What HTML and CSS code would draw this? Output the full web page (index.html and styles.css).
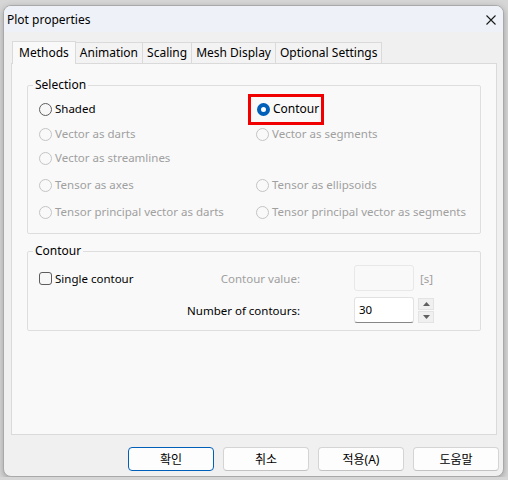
FILE: index.html
```html
<!DOCTYPE html>
<html lang="ko">

<head>
    <meta charset="UTF-8">
    <meta name="viewport" content="width=device-width, initial-scale=1.0">
    <title>Plot properties</title>
    <link rel="stylesheet" href="styles.css">
</head>

<body>
    <div class="window">
        <!-- Title bar -->
        <div class="titlebar">
            <span class="title">Plot properties</span>
            <span class="close">
                <svg width="10" height="10" viewBox="0 0 10 10">
                    <path d="M0.5 0.5 L9.5 9.5 M9.5 0.5 L0.5 9.5" stroke="#1a1a1a" stroke-width="1.1" fill="none" />
                </svg>
            </span>
        </div>

        <div class="content">
            <!-- Tabs -->
            <div class="tabs">
                <div class="tab active">Methods</div>
                <div class="tab">Animation</div>
                <div class="tab">Scaling</div>
                <div class="tab">Mesh Display</div>
                <div class="tab">Optional Settings</div>
            </div>

            <div class="panel">
                <!-- Selection group -->
                <fieldset class="group selection">
                    <legend>Selection</legend>
                    <div class="options">
                        <label class="radio"><span class="dot"></span>Shaded</label>
                        <label class="radio checked highlight"><span class="dot"></span>Contour</label>

                        <label class="radio disabled"><span class="dot"></span>Vector as darts</label>
                        <label class="radio disabled"><span class="dot"></span>Vector as segments</label>

                        <label class="radio disabled"><span class="dot"></span>Vector as streamlines</label>
                        <span></span>

                        <label class="radio disabled"><span class="dot"></span>Tensor as axes</label>
                        <label class="radio disabled"><span class="dot"></span>Tensor as ellipsoids</label>

                        <label class="radio disabled"><span class="dot"></span>Tensor principal vector as darts</label>
                        <label class="radio disabled"><span class="dot"></span>Tensor principal vector as segments</label>
                    </div>
                </fieldset>

                <!-- Contour group -->
                <fieldset class="group contour">
                    <legend>Contour</legend>
                    <div class="contour-grid">
                        <div class="row-label">
                            <label class="check"><span class="box"></span>Single contour</label>
                            <span class="muted">Contour value:</span>
                        </div>
                        <div class="field disabled"></div>
                        <span class="unit">[s]</span>

                        <span class="row-label end">Number of contours:</span>
                        <div class="field">30</div>
                        <div class="spin">
                            <span class="spin-btn">
                                <svg width="7" height="4" viewBox="0 0 7 4"><path d="M0 4 L3.5 0 L7 4 Z" fill="#606060" /></svg>
                            </span>
                            <span class="spin-btn">
                                <svg width="7" height="4" viewBox="0 0 7 4"><path d="M0 0 L3.5 4 L7 0 Z" fill="#606060" /></svg>
                            </span>
                        </div>
                    </div>
                </fieldset>
            </div>

            <!-- Dialog buttons -->
            <div class="buttons">
                <button class="default">확인</button>
                <button>취소</button>
                <button>적용(A)</button>
                <button>도움말</button>
            </div>
        </div>
    </div>
</body>

</html>
```

FILE: styles.css
```css
body {
    margin: 0;
    background: #d6d6d6;
    font-family: "Noto Sans", "Noto Sans CJK KR", sans-serif;
    font-size: 11.5px;
    color: #000;
}

.window {
    margin: 5px 0 0 3px;
    width: 499px;
    height: 470px;
    border: 1px solid #a9a9a9;
    border-radius: 8px;
    background: #f0f0f0;
    overflow: hidden;
    box-shadow: 0 2px 6px rgba(0, 0, 0, 0.25);
    display: flex;
    flex-direction: column;
}

.titlebar {
    height: 26px;
    flex: none;
    display: flex;
    align-items: center;
    justify-content: space-between;
    padding: 0 7px 0 3px;
    background: #eef2f8;
    font-size: 12px;
}

.close {
    display: flex;
    margin-top: 1px;
}

.content {
    flex: 1;
    display: flex;
    flex-direction: column;
    padding: 8px 0 0 7px;
}

.tabs {
    display: flex;
    align-items: flex-end;
    height: 23px;
    padding-left: 1px;
    font-size: 12px;
}

.tab {
    height: 20px;
    line-height: 19px;
    padding: 0 4px;
    border: 1px solid #dadada;
    border-bottom: none;
    border-left: none;
    background: #f3f3f3;
}

.tab.active {
    height: 22px;
    line-height: 21px;
    padding: 0 6px;
    border-left: 1px solid #dadada;
    background: #f9f9f9;
    margin-bottom: -1px;
    position: relative;
}

.panel {
    width: 486px;
    height: 372px;
    box-sizing: border-box;
    border: 1px solid #dadada;
    background: #f9f9f9;
    padding: 13px 15px 0 15px;
}

.group {
    margin: 0;
    padding: 0 0 0 11px;
    border: 1px solid #dedede;
    border-radius: 2px;
}

.group legend {
    margin-left: -6px;
    padding: 0 2px;
    line-height: 16px;
    font-size: 12px;
}

/* radio grid */
.options {
    display: grid;
    grid-template-columns: 217px auto;
    grid-template-rows: 24px 26px 22px 32px 22px;
    align-items: center;
    margin-top: 4px;
    padding-bottom: 10px;
}

.radio {
    display: flex;
    align-items: center;
    gap: 3px;
    white-space: nowrap;
    line-height: 16px;
}

.dot {
    width: 11px;
    height: 11px;
    border: 1px solid #5d5d5d;
    border-radius: 50%;
    background: #f7f7f7;
    display: inline-block;
}

.radio.disabled {
    color: #a0a0a0;
}

.radio.disabled .dot {
    border-color: #c4c4c4;
    background: #f9f9f9;
}

.radio.checked .dot {
    width: 5px;
    height: 5px;
    border: 4px solid #005fb8;
    background: #fff;
}

.radio.highlight {
    justify-self: start;
    margin-left: -8px;
    padding: 0 2px 0 6px;
    height: 25px;
    border: 3px solid #f00000;
    font-size: 12px;
}

.contour {
    margin-top: 9px;
}

.contour-grid {
    display: grid;
    grid-template-columns: 261px 114px auto;
    grid-template-rows: 26px 26px;
    row-gap: 6px;
    align-items: center;
    margin-top: 6px;
    padding-bottom: 7px;
}

.row-label {
    display: flex;
    justify-content: space-between;
    align-items: center;
}

.row-label.end {
    justify-self: end;
}

.check {
    display: flex;
    align-items: center;
    gap: 3px;
}

.box {
    width: 11px;
    height: 11px;
    border: 1px solid #5d5d5d;
    border-radius: 3px;
    background: #f7f7f7;
}

.muted {
    color: #a0a0a0;
}

.field {
    justify-self: end;
    width: 60px;
    height: 26px;
    box-sizing: border-box;
    padding: 0 4px;
    line-height: 24px;
    background: #fff;
    border: 1px solid #e2e2e2;
    border-bottom: 1px solid #868686;
    border-radius: 3px;
}

.field.disabled {
    background: #f9f9f9;
    border-color: #e8e8e8;
}

.unit {
    margin-left: 6px;
    color: #a0a0a0;
}

.spin {
    margin-left: 4px;
    width: 16px;
    display: flex;
    flex-direction: column;
    gap: 1px;
}

.spin-btn {
    height: 12px;
    display: flex;
    align-items: center;
    justify-content: center;
    background: #f0f0f0;
    border: 1px solid #e3e3e3;
    box-sizing: border-box;
}

.buttons {
    display: flex;
    justify-content: flex-end;
    gap: 9px;
    margin-top: 12px;
    padding-right: 4px;
}

.buttons button {
    width: 86px;
    height: 24px;
    font: inherit;
    font-size: 12px;
    color: #000;
    background: #fdfdfd;
    border: 1px solid #d4d4d4;
    border-bottom-color: #c2c2c2;
    border-radius: 4px;
    padding: 0;
}

.buttons button.default {
    border: 1px solid #005fb8;
}
```
